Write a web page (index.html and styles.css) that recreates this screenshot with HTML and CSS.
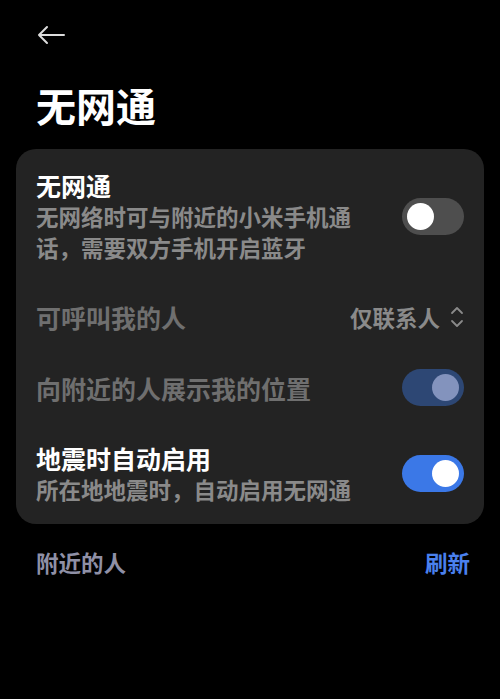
FILE: index.html
```html
<!DOCTYPE html>
<html lang="zh-CN">
<head>
  <meta charset="UTF-8" />
  <meta name="viewport" content="width=device-width, initial-scale=1.0"/>
  <title>无网通</title>
  <link rel="stylesheet" href="styles.css">
</head>
<body>
  <div class="page">
    <div class="topbar">
      <svg class="back" width="30" height="20" viewBox="0 0 30 20">
        <path d="M28 10H3M11 2L3 10l8 8" fill="none" stroke="#dcdcdc" stroke-width="2" stroke-linecap="round" stroke-linejoin="round"/>
      </svg>
    </div>

    <h1>无网通</h1>

    <div class="card">
      <div class="row first">
        <div class="text">
          <div class="title">无网通</div>
          <div class="desc">无网络时可与附近的小米手机通话，需要双方手机开启蓝牙</div>
        </div>
        <div class="switch"><span class="knob"></span></div>
      </div>

      <div class="row disabled">
        <div class="text">
          <div class="title">可呼叫我的人</div>
        </div>
        <div class="select">
          仅联系人
          <svg width="14" height="22" viewBox="0 0 14 22">
            <path d="M2 7l5-5 5 5M2 15l5 5 5-5" fill="none" stroke="#8a8a8a" stroke-width="1.8" stroke-linecap="round" stroke-linejoin="round"/>
          </svg>
        </div>
      </div>

      <div class="row disabled">
        <div class="text">
          <div class="title">向附近的人展示我的位置</div>
        </div>
        <div class="switch on dim"><span class="knob"></span></div>
      </div>

      <div class="row">
        <div class="text">
          <div class="title">地震时自动启用</div>
          <div class="desc">所在地地震时，自动启用无网通</div>
        </div>
        <div class="switch on"><span class="knob"></span></div>
      </div>
    </div>

    <div class="section">
      <span class="label">附近的人</span>
      <span class="link">刷新</span>
    </div>
  </div>
</body>
</html>
```

FILE: styles.css
```css
body {
  margin: 0;
  background: #000;
  font-family: "Noto Sans CJK SC", "Noto Sans", sans-serif;
  color: #fff;
}

.page {
  padding: 0 16px;
}

.topbar {
  height: 70px;
  display: flex;
  align-items: center;
  padding-left: 20px;
}

.back {
  display: block;
}

h1 {
  margin: 12px 0 0 20px;
  font-size: 40px;
  line-height: 46px;
  font-weight: 700;
}

.card {
  margin-top: 21px;
  background: #232323;
  border-radius: 20px;
  padding: 20px 20px 19px;
  display: flex;
  flex-direction: column;
  gap: 36px;
}

.row {
  display: flex;
  align-items: center;
  justify-content: space-between;
}

.row.first {
  margin-bottom: 2px;
}

.text {
  max-width: 330px;
}

.title {
  font-size: 25px;
  line-height: 32px;
  font-weight: 700;
}

.desc {
  font-size: 22.5px;
  line-height: 31px;
  color: #8a8a8a;
  font-weight: 700;
}

.disabled .title {
  color: #6f6f6f;
}

.switch {
  width: 62px;
  height: 37px;
  border-radius: 19px;
  background: #4e4e4e;
  display: flex;
  align-items: center;
  padding: 0 5px;
  box-sizing: border-box;
  flex-shrink: 0;
}

.knob {
  width: 27px;
  height: 27px;
  border-radius: 50%;
  background: #fff;
}

.switch.on {
  background: #3b78e7;
  justify-content: flex-end;
}

.switch.dim {
  background: #2d4774;
}

.switch.dim .knob {
  background: #8393bd;
}

.select {
  display: flex;
  align-items: center;
  gap: 10px;
  font-size: 22.5px;
  line-height: 32px;
  font-weight: 700;
  color: #8a8a8a;
}

.section {
  display: flex;
  justify-content: space-between;
  align-items: center;
  padding: 22px 14px 0 20px;
  font-size: 22.5px;
  line-height: 32px;
  font-weight: 700;
}

.label {
  color: #8f90a6;
}

.link {
  color: #4a80ee;
}
```
